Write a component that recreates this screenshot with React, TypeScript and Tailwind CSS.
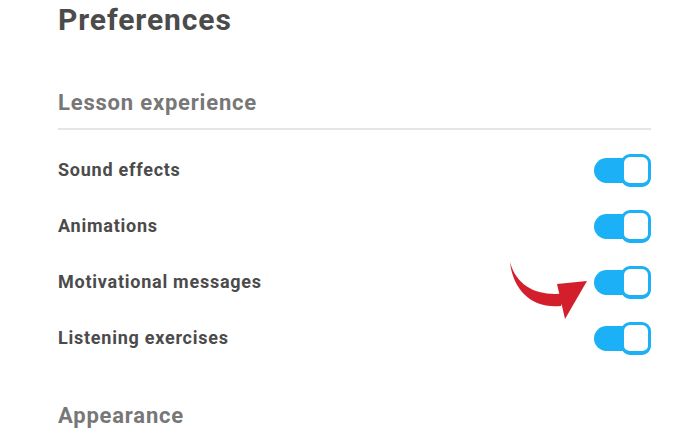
import React from "react";

const font = { fontFamily: "Roboto, 'Noto Sans', sans-serif" };

function Toggle() {
  return (
    <div className="flex items-center">
      <div className="h-[25px] w-[42px] rounded-full bg-[#1cb0f6]" />
      <div className="relative -ml-[15px] h-[33px] w-[30px] rounded-[9px] border-[3px] border-b-4 border-[#1cb0f6] bg-white" />
    </div>
  );
}

const items = ["Sound effects", "Animations", "Motivational messages", "Listening exercises"];

export default function App() {
  return (
    <div className="relative h-[430px] w-[700px] overflow-hidden bg-white pl-[58px] pr-[49px] pt-[2px]" style={font}>
      <h1 className="text-[30px] font-bold leading-[36px] tracking-[0.9px] text-[#4b4b4b]">Preferences</h1>
      <h2 className="mt-[50px] border-b-2 border-[#e5e5e5] pb-[10px] text-[22px] font-bold leading-[30px] tracking-[0.8px] text-[#777777]">
        Lesson experience
      </h2>
      <div className="mt-[12px]">
        {items.map((label) => (
          <div key={label} className="flex h-[56px] items-center justify-between">
            <span className="text-[18px] font-bold leading-[56px] tracking-[0.75px] text-[#4b4b4b]">{label}</span>
            <Toggle />
          </div>
        ))}
      </div>
      <h2 className="mt-[35px] text-[22px] font-bold leading-[30px] tracking-[0.8px] text-[#777777]">Appearance</h2>

      {/* red pointer arrow beside the third toggle */}
      <svg className="pointer-events-none absolute left-0 top-0" width="700" height="430" viewBox="0 0 700 430">
        <path
          d="M510 262 C513 291 533 309 561 306 L566 293 C540 297 517 288 510 262 Z"
          fill="#d21f2b"
        />
        <path d="M587 281 L557 284 L565 319 Z" fill="#d21f2b" />
      </svg>
    </div>
  );
}
